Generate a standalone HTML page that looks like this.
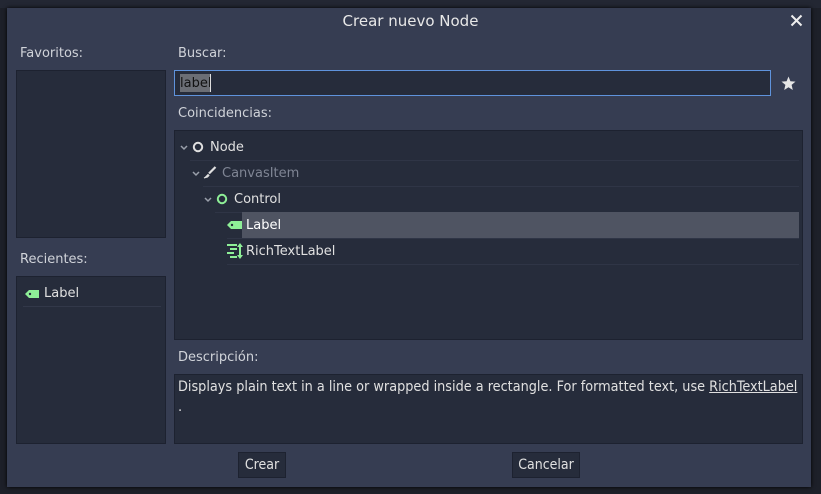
<!DOCTYPE html>
<html><head><meta charset="utf-8"><style>
*{margin:0;padding:0;box-sizing:border-box}
body{width:821px;height:494px;background:#1d2029;position:relative;overflow:hidden;font-family:"DejaVu Sans","Liberation Sans",sans-serif;font-size:13px;color:#e0e0e0}
.a{position:absolute}
.dlg{left:7px;top:8px;width:804px;height:479px;background:#363d52;box-shadow:0 0 4px #000}
.lbl{color:#d0d3d9;font-size:13px}
.box{background:#262c3b;border:1px solid #1d2230}
.btn{background:#262c3b;border:1px solid #1d2230;color:#e0e0e0;font-family:"DejaVu Sans Condensed","DejaVu Sans",sans-serif;text-align:center;line-height:25px;font-size:14px}
</style></head><body>
<div class="a" style="left:0;top:0;width:821px;height:8px;background:#232733"></div>
<div class="a dlg"></div>
<div class="a" style="left:0;width:821px;text-align:center;font-size:15px;color:#e8e8e8;top:12px">Crear nuevo Node</div>
<svg class="a" style="left:790px;top:14px" width="13" height="13"><path d="M1.5 1.5L11.5 11.5M11.5 1.5L1.5 11.5" stroke="#eee" stroke-width="2"/></svg>

<div class="a lbl" style="left:20px;top:46px">Favoritos:</div>
<div class="a box" style="left:16px;top:70px;width:150px;height:168px"></div>
<div class="a lbl" style="left:20px;top:252px">Recientes:</div>
<div class="a box" style="left:16px;top:276px;width:150px;height:168px"></div>
<div class="a" style="left:24px;top:287px;width:16px;height:14px"><svg width="16" height="14"><path d="M1 7L5 3H15V11H5Z" fill="#8eef97"/><circle cx="6" cy="7" r="1.2" fill="#262c3b"/></svg></div>
<div class="a" style="left:44px;top:286px;color:#e0e0e0">Label</div>
<div class="a" style="left:23px;top:306px;width:138px;height:1px;background:#323849"></div>

<div class="a lbl" style="left:178px;top:46px">Buscar:</div>
<div class="a" style="left:174px;top:70px;width:597px;height:26px;background:#262c3b;border:1px solid #5f93dc"></div>
<div class="a" style="left:180px;top:74px;width:31px;height:18px;background:#6b6e75"></div>
<div class="a" style="left:180px;top:76px;color:#111;font-size:13px">label</div>
<div class="a" style="left:210px;top:74px;width:1px;height:18px;background:#ddd"></div>
<svg class="a" style="left:781px;top:76px" width="15" height="15"><path d="M7.5 0.5L9.4 5.3L14.5 5.6L10.6 8.9L11.8 14L7.5 11.2L3.2 14L4.4 8.9L0.5 5.6L5.6 5.3Z" fill="#e6e6e6"/></svg>

<div class="a lbl" style="left:178px;top:106px">Coincidencias:</div>
<div class="a box" style="left:174px;top:130px;width:629px;height:210px"></div>
<svg class="a" style="left:180px;top:145px" width="8" height="6"><path d="M1 1L4 4L7 1" stroke="#9aa0ab" stroke-width="1.5" fill="none"/></svg>
<svg class="a" style="left:192px;top:141px" width="12" height="12"><circle cx="6" cy="6" r="4.2" stroke="#e0e0e0" stroke-width="2" fill="none"/></svg>
<div class="a" style="left:210px;top:140px">Node</div>
<div class="a" style="left:190px;top:160px;width:609px;height:1px;background:#2f3546"></div>
<svg class="a" style="left:192px;top:171px" width="8" height="6"><path d="M1 1L4 4L7 1" stroke="#9aa0ab" stroke-width="1.5" fill="none"/></svg>
<svg class="a" style="left:203px;top:166px" width="14" height="13"><path d="M12.5 1L6 7.5" stroke="#e0e0e0" stroke-width="2.2"/><path d="M5 8.5L2 11.5L1 12L4.5 11L6 9.5Z" fill="#e0e0e0" stroke="#e0e0e0"/></svg>
<div class="a" style="left:222px;top:166px;color:#7f8594">CanvasItem</div>
<div class="a" style="left:203px;top:186px;width:596px;height:1px;background:#2f3546"></div>
<svg class="a" style="left:204px;top:197px" width="8" height="6"><path d="M1 1L4 4L7 1" stroke="#9aa0ab" stroke-width="1.5" fill="none"/></svg>
<svg class="a" style="left:216px;top:193px" width="12" height="12"><circle cx="6" cy="6" r="4.2" stroke="#8eef97" stroke-width="2" fill="none"/></svg>
<div class="a" style="left:234px;top:192px">Control</div>
<div class="a" style="left:215px;top:212px;width:584px;height:1px;background:#2f3546"></div>
<div class="a" style="left:242px;top:212px;width:557px;height:26px;background:#4f5462"></div>
<svg class="a" style="left:227px;top:219px" width="16" height="12"><path d="M0 6L4 2H15V10H4Z" fill="#8eef97"/><circle cx="5" cy="6" r="1.2" fill="#262c3b"/></svg>
<div class="a" style="left:246px;top:218px;color:#fff">Label</div>
<div class="a" style="left:227px;top:238px;width:572px;height:1px;background:#2f3546"></div>
<svg class="a" style="left:227px;top:243px" width="16" height="16"><g fill="#8eef97"><rect x="0" y="1" width="10" height="2"/><rect x="3" y="5" width="7" height="2"/><rect x="0" y="9" width="7" height="2"/><rect x="3" y="13" width="7" height="2"/><rect x="12" y="3" width="2" height="10"/><path d="M10 4L13 0L16 4Z"/><path d="M10 12L13 16L16 12Z"/></g></svg>
<div class="a" style="left:246px;top:244px">RichTextLabel</div>
<div class="a" style="left:227px;top:264px;width:572px;height:1px;background:#2f3546"></div>

<div class="a lbl" style="left:178px;top:350px">Descripción:</div>
<div class="a box" style="left:174px;top:374px;width:629px;height:70px"></div>
<div class="a" style="left:178px;top:379px;font-family:'DejaVu Sans Condensed','Liberation Sans Narrow',sans-serif;font-size:14.3px;color:#e0e0e0;white-space:nowrap;width:622px">Displays plain text in a line or wrapped inside a rectangle. For formatted text, use <span style="text-decoration:underline">RichTextLabel</span></div>
<div class="a" style="left:178px;top:400px;font-size:13px">.</div>

<div class="a btn" style="left:238px;top:452px;width:48px;height:26px">Crear</div>
<div class="a btn" style="left:512px;top:452px;width:68px;height:26px">Cancelar</div>
</body></html>
